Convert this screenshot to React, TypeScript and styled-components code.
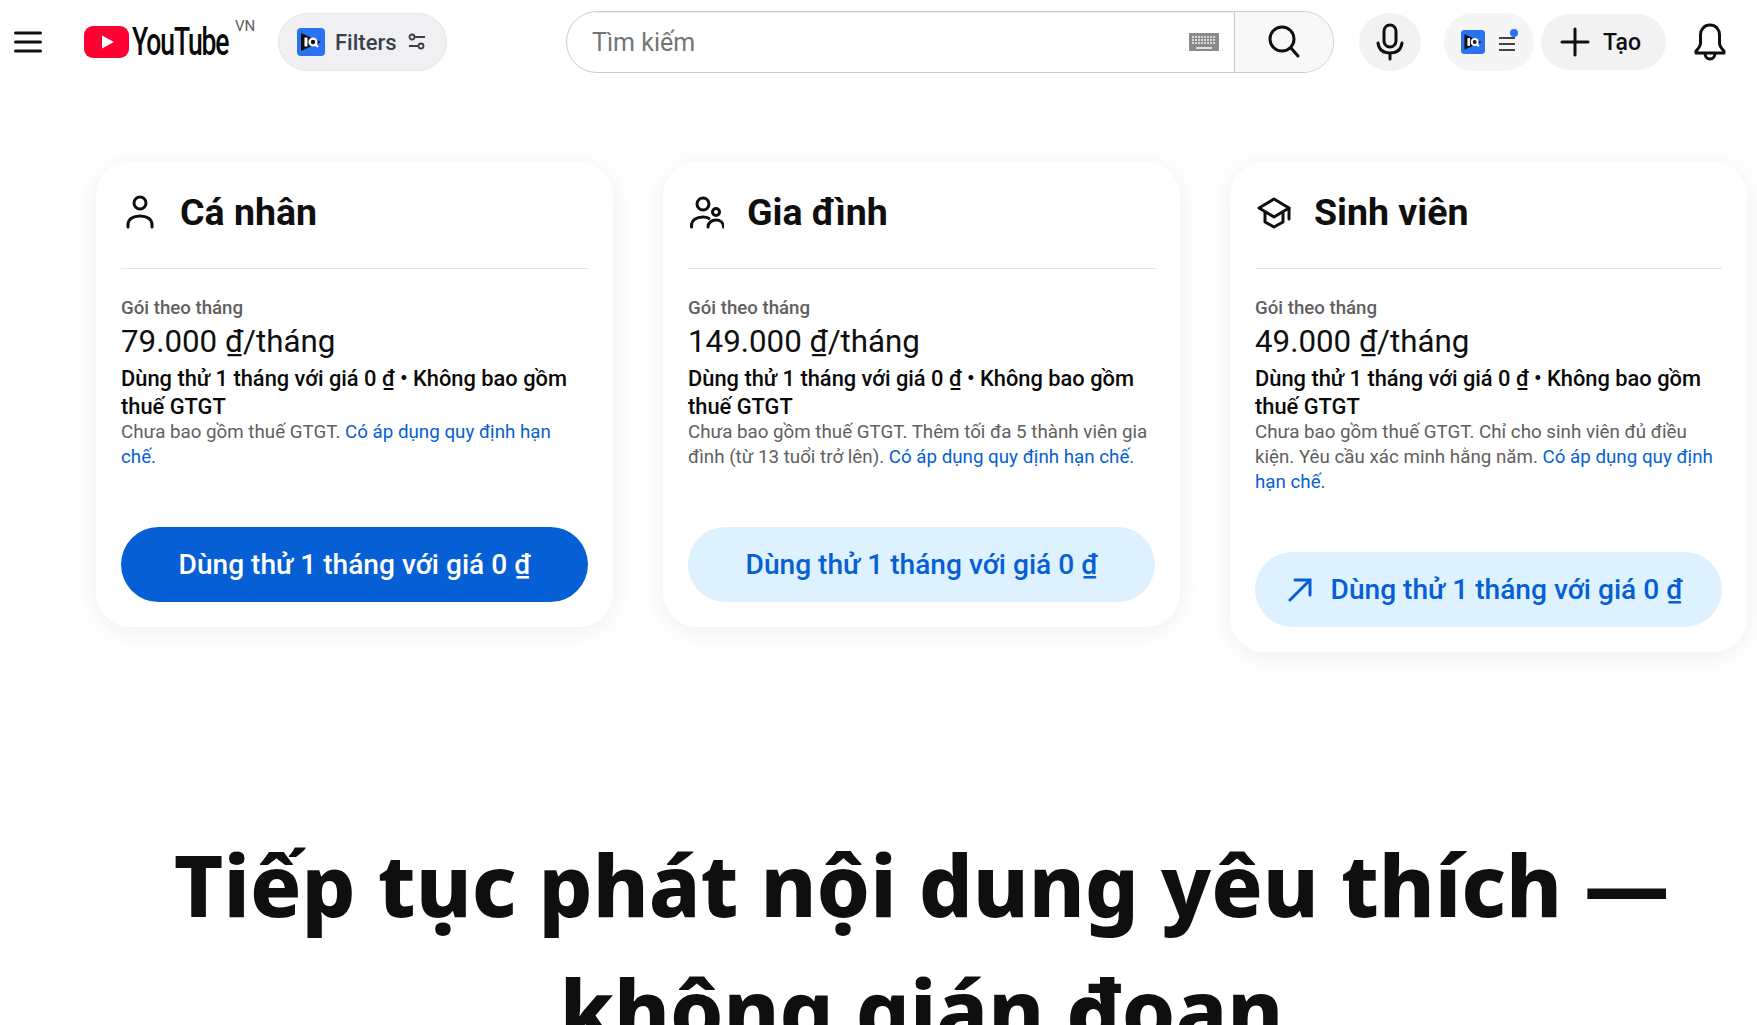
import React from 'react';
import styled, { createGlobalStyle } from 'styled-components';

const GlobalStyle = createGlobalStyle`
  html, body {
    margin: 0;
    height: 100%;
    overflow: hidden;
    background: #fff;
    font-family: Roboto, "Liberation Sans", sans-serif;
    color: #0f0f0f;
  }
`;

const Masthead = styled.header`
  display: flex;
  align-items: center;
  height: 84px;
  padding-left: 14px;
`;

const MenuButton = styled.div`
  display: flex;
  width: 28px;
  height: 28px;
  flex: none;
`;

const Logo = styled.div`
  display: flex;
  align-items: center;
  flex: none;
  width: 194px;
  margin-left: 42px;
  height: 40px;
`;

const Wordmark = styled.span`
  display: inline-block;
  margin-left: 3px;
  font-size: 39px;
  line-height: 40px;
  font-weight: 500;
  letter-spacing: -1.6px;
  color: #0a0a0a;
  transform: scaleX(0.68);
  transform-origin: left center;
  white-space: nowrap;
`;

const Country = styled.sup`
  align-self: flex-start;
  margin: -4px 0 0 -39px;
  font-size: 15px;
  line-height: 16px;
  color: #606060;
  vertical-align: baseline;
`;

const FilterPill = styled.div`
  display: flex;
  align-items: center;
  box-sizing: border-box;
  flex: none;
  width: 169px;
  height: 58px;
  padding-left: 18px;
  gap: 10px;
  background: #f0f0f2;
  border: 1px solid #e6e6ea;
  border-radius: 29px;
  font-size: 22px;
  font-weight: 500;
  color: #3a3f4b;
`;

const SearchBox = styled.div`
  display: flex;
  box-sizing: border-box;
  flex: none;
  width: 768px;
  height: 62px;
  margin-left: 119px;
  border: 1px solid #ccc;
  border-radius: 31px;
  overflow: hidden;
`;

const SearchField = styled.div`
  display: flex;
  flex: 1;
  align-items: center;
  justify-content: space-between;
  padding: 0 15px 0 25px;
  font-size: 25px;
  color: #757575;
  box-shadow: inset 0 1px 2px #eee;
`;

const SearchButton = styled.div`
  display: flex;
  align-items: center;
  justify-content: center;
  width: 99px;
  box-sizing: border-box;
  background: #f8f8f8;
  border-left: 1px solid #ccc;
`;

const MicButton = styled.div`
  display: flex;
  align-items: center;
  justify-content: center;
  flex: none;
  width: 62px;
  height: 58px;
  margin-left: 25px;
  border-radius: 50%;
  background: #f2f2f2;
`;

const QueuePill = styled.div`
  display: flex;
  align-items: center;
  flex: none;
  box-sizing: border-box;
  width: 90px;
  height: 58px;
  margin-left: 23px;
  padding-left: 17px;
  gap: 12px;
  border-radius: 29px;
  background: #f5f5f5;
`;

const CreateButton = styled.div`
  display: flex;
  align-items: center;
  flex: none;
  box-sizing: border-box;
  width: 125px;
  height: 56px;
  margin-left: 7px;
  padding-left: 19px;
  gap: 13px;
  border-radius: 28px;
  background: #f2f2f2;
  font-size: 23px;
  font-weight: 500;
`;

const BellButton = styled.div`
  display: flex;
  flex: none;
  margin-left: 28px;
`;

const Content = styled.main`
  padding: 78px 10px 0 96px;
`;

const Plans = styled.section`
  display: flex;
  align-items: flex-start;
  gap: 50px;
`;

const Card = styled.article`
  display: flex;
  flex-direction: column;
  box-sizing: border-box;
  width: 517px;
  padding: 25px;
  border-radius: 34px;
  background: #fff;
  box-shadow: 0 4px 28px rgba(0, 0, 0, 0.07);
`;

const CardHead = styled.div`
  display: flex;
  align-items: center;
  height: 50px;
  gap: 23px;
  padding: 0 0 31px 2px;
  border-bottom: 1px solid #e5e5e5;
`;

const CardTitle = styled.h2`
  margin: 0;
  font-size: 37.5px;
  line-height: 44px;
  font-weight: 700;
  color: #0f0f0f;
`;

const PlanLabel = styled.div`
  margin-top: 28px;
  font-size: 18.67px;
  line-height: 22px;
  font-weight: 500;
  color: #606060;
`;

const Price = styled.div`
  margin-top: 4px;
  font-size: 31.3px;
  line-height: 38px;
  color: #0f0f0f;
`;

const Offer = styled.div`
  margin-top: 4px;
  font-size: 21.85px;
  line-height: 28px;
  font-weight: 500;
  color: #0a0a0a;
`;

const Fine = styled.div`
  margin-top: -1px;
  font-size: 18.75px;
  line-height: 25px;
  color: #606060;

  a {
    color: #065fd4;
    text-decoration: none;
  }
`;

const TrialButton = styled.div<{ $primary?: boolean; $external?: boolean }>`
  display: flex;
  align-items: center;
  justify-content: center;
  box-sizing: border-box;
  gap: 19px;
  height: 75px;
  margin-top: 57px;
  padding-right: ${p => (p.$external ? '7px' : '0')};
  border-radius: 38px;
  font-size: 28.1px;
  font-weight: 500;
  background: ${p => (p.$primary ? '#065fd4' : '#def1ff')};
  color: ${p => (p.$primary ? '#fff' : '#065fd4')};
`;

const Headline = styled.h1`
  margin: 170px 0 0;
  text-align: center;
  font-family: "Noto Sans", sans-serif;
  font-size: 85px;
  line-height: 125px;
  font-weight: 800;
  color: #0f0f0f;
`;

const IqIcon = ({ size }: { size: number }) => (
  <svg width={size} height={size} viewBox="0 0 28 28">
    <rect width="28" height="28" rx="4" fill="#2a73f0" />
    <path d="M4 5l20 9-20 9z" fill="#111" />
    <rect x="7.5" y="9.5" width="3" height="9" fill="#fff" />
    <circle cx="16" cy="14" r="3.4" fill="none" stroke="#fff" strokeWidth="2.4" />
    <path d="M18 16l3 3" stroke="#fff" strokeWidth="2.2" />
  </svg>
);

const PersonIcon = () => (
  <svg width="34" height="36" viewBox="0 0 34 36" fill="none" stroke="#0f0f0f" strokeWidth="3" strokeLinecap="round">
    <circle cx="17" cy="9" r="6" />
    <path d="M5 33v-2c0-6 5-9 12-9s12 3 12 9v2" />
  </svg>
);

const FamilyIcon = () => (
  <svg width="34" height="36" viewBox="0 0 34 36" fill="none" stroke="#0f0f0f" strokeWidth="3" strokeLinecap="round">
    <circle cx="13" cy="10" r="6" />
    <path d="M1.5 33v-1c0-6 5-9 11.5-9 2.5 0 4.500.5 6 1.500" />
    <circle cx="26" cy="18" r="3.500" />
    <path d="M18 33c0-4 3.500-7 8-7s7.500 3 7.500 7" />
  </svg>
);

const CapIcon = () => (
  <svg width="34" height="36" viewBox="0 0 34 36" fill="none" stroke="#0f0f0f" strokeWidth="3" strokeLinejoin="round" strokeLinecap="round">
    <path d="M17 5L2 14l15 9 15-9z" />
    <path d="M8 18v10l9 5 9-5V18" />
    <path d="M32 14v11" />
  </svg>
);

const plans = [
  {
    title: 'Cá nhân',
    price: '79.000 ₫/tháng',
    icon: <PersonIcon />,
    fine: 'Chưa bao gồm thuế GTGT. ',
    primary: true,
  },
  {
    title: 'Gia đình',
    price: '149.000 ₫/tháng',
    icon: <FamilyIcon />,
    fine: 'Chưa bao gồm thuế GTGT. Thêm tối đa 5 thành viên gia đình (từ 13 tuổi trở lên). ',
  },
  {
    title: 'Sinh viên',
    price: '49.000 ₫/tháng',
    icon: <CapIcon />,
    fine: 'Chưa bao gồm thuế GTGT. Chỉ cho sinh viên đủ điều kiện. Yêu cầu xác minh hằng năm. ',
    external: true,
  },
];

export default function App() {
  return (
    <>
      <GlobalStyle />
      <Masthead>
        <MenuButton>
          <svg width="28" height="28" viewBox="0 0 28 28" stroke="#0f0f0f" strokeWidth="3" strokeLinecap="round">
            <path d="M1.500 5h25M1.500 14h25M1.500 23h25" />
          </svg>
        </MenuButton>
        <Logo>
          <svg width="45" height="32" viewBox="0 0 45 32" style={{ flex: 'none' }}>
            <rect width="45" height="32" rx="9" fill="#ff0033" />
            <path d="M18 9.500l12 6.500-12 6.500z" fill="#fff" />
          </svg>
          <Wordmark>YouTube</Wordmark>
          <Country>VN</Country>
        </Logo>
        <FilterPill>
          <IqIcon size={28} />
          <span>Filters</span>
          <svg width="20" height="20" viewBox="0 0 20 20" fill="none" stroke="#3a3f4b" strokeWidth="1.800">
            <circle cx="5" cy="5" r="2.500" />
            <path d="M8 5h10M2 14h9" />
            <circle cx="14" cy="14" r="2.500" />
          </svg>
        </FilterPill>
        <SearchBox>
          <SearchField>
            <span>Tìm kiếm</span>
            <svg width="30" height="18" viewBox="0 0 30 18">
              <defs>
                <pattern id="keys" width="3" height="3" patternUnits="userSpaceOnUse">
                  <rect width="2" height="2" fill="#d8d8d8" />
                </pattern>
              </defs>
              <rect width="30" height="18" fill="#8a8a8a" />
              <rect x="3" y="3" width="24" height="9" fill="url(#keys)" />
              <rect x="7" y="14" width="16" height="2" fill="#e0e0e0" />
            </svg>
          </SearchField>
          <SearchButton>
            <svg width="36" height="36" viewBox="0 0 36 36" fill="none" stroke="#0f0f0f" strokeWidth="3" strokeLinecap="round">
              <circle cx="16" cy="15" r="12" />
              <path d="M25 24l7 8" />
            </svg>
          </SearchButton>
        </SearchBox>
        <MicButton>
          <svg width="28" height="38" viewBox="0 0 28 38" fill="none" stroke="#0f0f0f" strokeWidth="3" strokeLinecap="round">
            <rect x="8" y="2" width="12" height="22" rx="6" />
            <path d="M2 20c1 7 6 10 12 10s11-3 12-10M14 30v6" />
          </svg>
        </MicButton>
        <QueuePill>
          <IqIcon size={24} />
          <svg width="22" height="28" viewBox="0 0 22 28" fill="none" stroke="#444" strokeWidth="2">
            <path d="M2 10h16M2 16h16M2 22h16" />
            <circle cx="17" cy="5" r="4" fill="#2a73f0" stroke="none" />
          </svg>
        </QueuePill>
        <CreateButton>
          <svg width="30" height="30" viewBox="0 0 30 30" stroke="#0f0f0f" strokeWidth="3" strokeLinecap="round">
            <path d="M15 2v26M2 15h26" />
          </svg>
          <span>Tạo</span>
        </CreateButton>
        <BellButton>
          <svg width="32" height="38" viewBox="0 0 32 38" fill="none" stroke="#0f0f0f" strokeWidth="3" strokeLinejoin="round">
            <path d="M16 2c-6 0-9.500 4.500-9.500 10v8c0 3-1.500 5-4.500 8v2h28v-2c-3-3-4.500-5-4.500-8v-8C25.500 6.500 22 2 16 2z" />
            <path d="M11 30c0 3.500 2 6 5 6s5-2.500 5-6" />
          </svg>
        </BellButton>
      </Masthead>
      <Content>
        <Plans>
          {plans.map(plan => (
            <Card key={plan.title}>
              <CardHead>
                {plan.icon}
                <CardTitle>{plan.title}</CardTitle>
              </CardHead>
              <PlanLabel>Gói theo tháng</PlanLabel>
              <Price>{plan.price}</Price>
              <Offer>Dùng thử 1 tháng với giá 0 ₫ • Không bao gồm thuế GTGT</Offer>
              <Fine>
                {plan.fine}
                <a>Có áp dụng quy định hạn chế.</a>
              </Fine>
              <TrialButton $primary={plan.primary} $external={plan.external}>
                {plan.external && (
                  <svg width="24" height="24" viewBox="0 0 24 24" fill="none" stroke="#065fd4" strokeWidth="3" strokeLinecap="round">
                    <path d="M2 22L22 2M7 2h15v15" />
                  </svg>
                )}
                <span>Dùng thử 1 tháng với giá 0 ₫</span>
              </TrialButton>
            </Card>
          ))}
        </Plans>
        <Headline>Tiếp tục phát nội dung yêu thích — không gián đoạn</Headline>
      </Content>
    </>
  );
}
